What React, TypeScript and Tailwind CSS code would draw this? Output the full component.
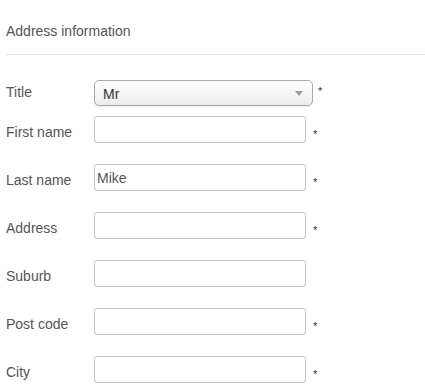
import { useState } from 'react';

interface Field {
  label: string;
  value: string;
  required: boolean;
}

const fields: Field[] = [
  { label: 'First name', value: '', required: true },
  { label: 'Last name', value: 'Mike', required: true },
  { label: 'Address', value: '', required: true },
  { label: 'Suburb', value: '', required: false },
  { label: 'Post code', value: '', required: true },
  { label: 'City', value: '', required: true },
];

export default function App() {
  const [title] = useState('Mr');

  return (
    <div className="bg-white w-[425px] h-[390px] overflow-hidden pl-[6px] font-['Liberation_Sans',Arial,sans-serif] text-[14px] text-[#555]">
      <div className="pt-[23px] leading-[16px]">Address information</div>
      <div className="mt-[15px] h-px bg-[#e3e3e3]" />

      <div className="mt-[25px] flex items-start h-[26px] mb-[10px]">
        <div className="w-[88px] pt-[4px] leading-[16px]">Title</div>
        <div className="w-[219px] h-[26px] rounded-[5px] border border-[#aaa] bg-gradient-to-b from-white to-[#ececec] shadow-[0_1px_1px_rgba(0,0,0,0.08)] flex items-center pl-[8px] pr-[9px] text-[#333]">
          <span className="flex-1 leading-[16px] pt-[1px]">{title}</span>
          <svg width="8" height="5" viewBox="0 0 8 5" className="mt-[1px]">
            <path d="M0 0 L8 0 L4 5 Z" fill="#9a9a9a" />
          </svg>
        </div>
        <span className="ml-[5px] pt-[5px] text-[11px] leading-[12px] text-[#333]">*</span>
      </div>

      <div className="flex flex-col gap-[21px]">
        {fields.map((f) => (
          <div key={f.label} className="flex items-start h-[27px]">
            <div className="w-[88px] pt-[8px] leading-[16px]">{f.label}</div>
            <input
              readOnly
              value={f.value}
              className="w-[212px] h-[27px] rounded-[3px] border border-[#c8c8c8] bg-white px-[2px] text-[14px] text-[#555] outline-none font-['Liberation_Sans',Arial,sans-serif]"
            />
            {f.required && (
              <span className="ml-[7px] pt-[12px] text-[11px] leading-[12px] text-[#333]">*</span>
            )}
          </div>
        ))}
      </div>
    </div>
  );
}
